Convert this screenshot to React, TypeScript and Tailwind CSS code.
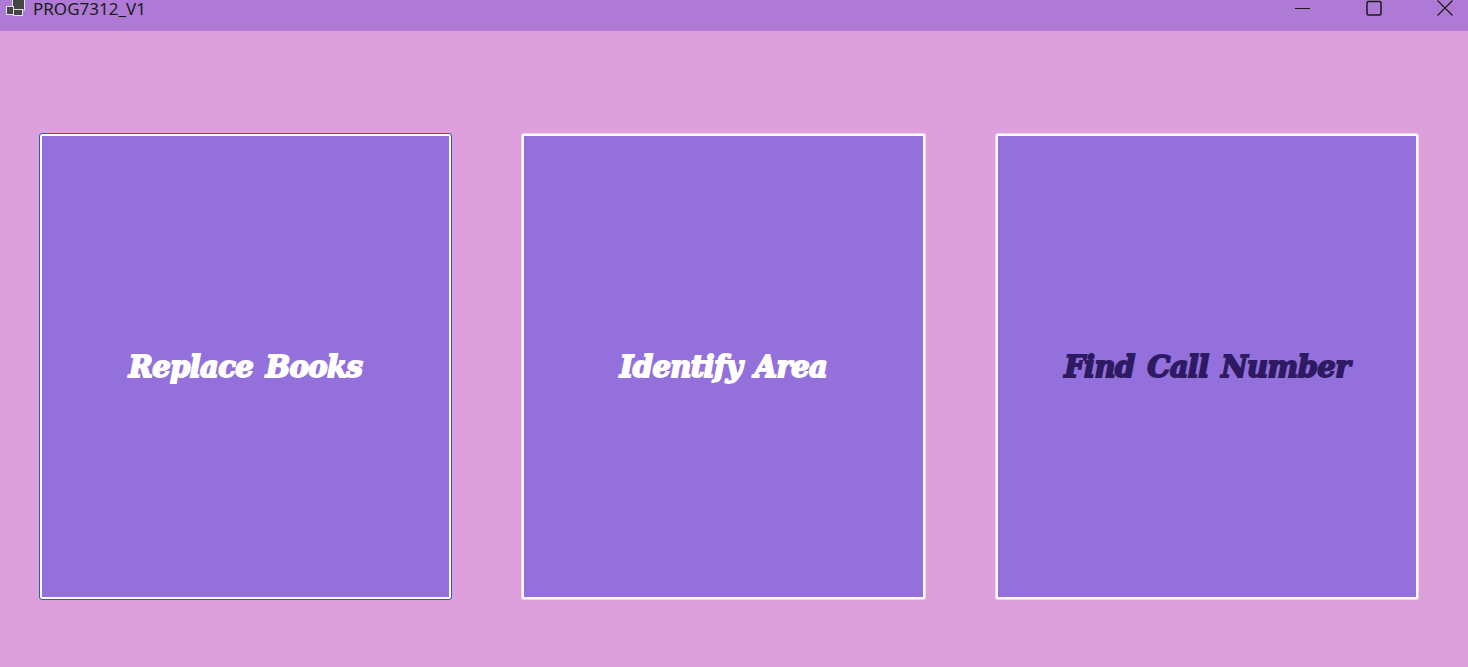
import { ReactNode } from "react";

function WindowIcon() {
  return (
    <svg width="21" height="17" viewBox="0 0 21 17" className="shrink-0">
      <rect x="7.5" y="-2" width="12" height="12" fill="#454545" stroke="#e6dcea" />
      <rect x="1.5" y="6.5" width="7" height="8" fill="#454545" stroke="#e6dcea" />
      <rect x="8.5" y="9.5" width="9" height="6" fill="#454545" stroke="#e6dcea" />
    </svg>
  );
}

function MenuButton({
  label,
  width,
  dark,
  focused,
}: {
  label: ReactNode;
  width: string;
  dark?: boolean;
  focused?: boolean;
}) {
  return (
    <button
      className={`${width} h-[465px] shrink-0 flex items-center justify-center bg-[#9370db] border-2 border-[#fdfafe] rounded-[2px] ${
        focused ? "outline outline-1 outline-[#2a5fb8]" : "shadow-[0_0_0_1px_rgba(240,232,240,0.75)]"
      }`}
    >
      <span
        className={`font-['DejaVu_Serif',serif] font-bold italic text-[29px] leading-none tracking-[-0.6px] [word-spacing:3px] pt-[2px] ${
          dark
            ? "text-[#2e1a63] [-webkit-text-stroke:1.8px_#2e1a63]"
            : "text-white [-webkit-text-stroke:1.8px_white]"
        }`}
      >
        {label}
      </span>
    </button>
  );
}

export default function App() {
  return (
    <div className="w-[1468px] h-[667px] overflow-hidden bg-[#dda0dd]">
      {/* title bar */}
      <header className="h-[31px] bg-[#ae7ad6] flex items-start justify-between">
        <div className="flex items-start gap-[7px] pl-[5px]">
          <WindowIcon />
          <span className="text-[17px] leading-[17px] text-[#1a1a1a] font-['Noto_Sans',sans-serif]">PROG7312_V1</span>
        </div>
        <div className="flex items-start gap-[55px] pr-[15px]">
          <svg width="16" height="16" viewBox="0 0 16 16">
            <path d="M0 8.5h15" stroke="#1a1a1a" strokeWidth="1" />
          </svg>
          <svg width="16" height="16" viewBox="0 0 16 16">
            <rect x="1" y="1.5" width="14" height="13.5" rx="1.5" fill="none" stroke="#1a1a1a" strokeWidth="1.5" />
          </svg>
          <svg width="16" height="16" viewBox="0 0 16 16">
            <path d="M0.5 0.5l15 15M15.5 0.5l-15 15" stroke="#1a1a1a" strokeWidth="1.2" />
          </svg>
        </div>
      </header>

      <main className="flex items-start pt-[103px] pl-[40px] gap-[71px]">
        <MenuButton label="Replace Books" width="w-[411px]" focused />
        <MenuButton label="Identify Area" width="w-[403px]" />
        <MenuButton label="Find Call Number" width="w-[422px]" dark />
      </main>
    </div>
  );
}
